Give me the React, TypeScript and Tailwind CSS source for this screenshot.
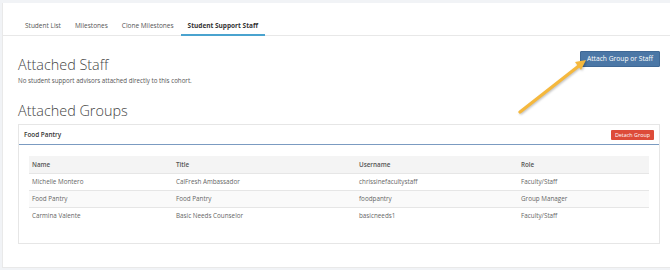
import React from "react";

const rows = [
  ["Michelle Montero", "CalFresh Ambassador", "chrissinefacultystaff", "Faculty/Staff"],
  ["Food Pantry", "Food Pantry", "foodpantry", "Group Manager"],
  ["Carmina Valente", "Basic Needs Counselor", "basicneeds1", "Faculty/Staff"],
];

export default function App() {
  return (
    <div
      className="w-[670px] h-[270px] bg-[#f1f3f6] pt-[3px] pl-[2px] overflow-hidden"
      style={{ fontFamily: '"Open Sans", "Liberation Sans", sans-serif' }}
    >
      <div className="relative h-[265px] bg-white border-l border-b border-[#e9e9e9]">
        {/* Tabs */}
        <div className="flex items-end h-[33px] border-b border-[#e8e8e8] pl-[15px]">
          {["Student List", "Milestones", "Clone Milestones", "Student Support Staff"].map((t, i) => (
            <div
              key={t}
              className={
                i === 3
                  ? "px-[7px] pb-[4px] border-b-[2px] border-[#4aa3cf] text-[6.5px] leading-[9px] font-bold text-[#333] mb-[-1px]"
                  : "px-[7px] pb-[4px] border-b-[2px] border-transparent text-[6.5px] leading-[9px] text-[#555] mb-[-1px]"
              }
            >
              {t}
            </div>
          ))}
        </div>

        <div className="pl-[15px] pr-[10px] pt-[15px]">
          <div className="flex justify-between items-start">
            <h1 className="mt-[5px] text-[14.4px] leading-[18px] font-light text-[#444]">Attached Staff</h1>
            <button className="h-[16px] px-[6px] bg-[#4b77a6] border border-[#3f6895] rounded-[1px] text-white text-[6.7px] leading-[14px]">
              Attach Group or Staff
            </button>
          </div>
          <p className="mt-[3px] text-[6.2px] leading-[8px] text-[#555]">
            No student support advisors attached directly to this cohort.
          </p>
          <h2 className="mt-[17px] text-[14.4px] leading-[18px] font-light text-[#444]">Attached Groups</h2>

          <div className="mt-[4px] border border-[#e6e6e6]">
            <div className="flex items-center justify-between h-[20px] px-[5px] border-b-[1.5px] border-[#7b9bc1]">
              <span className="text-[6.4px] font-semibold text-[#333]">Food Pantry</span>
              <span className="h-[10px] px-[4px] bg-[#dd4b39] rounded-[1px] text-white text-[5.4px] leading-[10px]">
                Detach Group
              </span>
            </div>
            <div className="px-[10px] pt-[11px] pb-[19px]">
              <div className="grid grid-cols-[144px_183px_162px_1fr] h-[17px] items-center bg-[#f4f4f4] text-[6.3px] font-semibold text-[#555]">
                <div className="pl-[3px]">Name</div>
                <div className="pl-[3px]">Title</div>
                <div className="pl-[3px]">Username</div>
                <div className="pl-[3px]">Role</div>
              </div>
              {rows.map((r, i) => (
                <div
                  key={i}
                  className={
                    i === 1
                      ? "grid grid-cols-[144px_183px_162px_1fr] h-[17px] items-center border-t border-[#e6e6e6] bg-[#fafafa] text-[6.3px] text-[#666]"
                      : "grid grid-cols-[144px_183px_162px_1fr] h-[17px] items-center border-t border-[#e6e6e6] text-[6.3px] text-[#666]"
                  }
                >
                  {r.map((c, j) => (
                    <div key={j} className="pl-[3px]">
                      {c}
                    </div>
                  ))}
                </div>
              ))}
            </div>
          </div>
        </div>

        {/* Arrow annotation */}
        <svg
          className="absolute left-[505px] top-[48px] pointer-events-none"
          width="90"
          height="70"
          viewBox="0 0 90 70"
          style={{ filter: "drop-shadow(1px 1.5px 1px rgba(0,0,0,0.25))" }}
        >
          <line x1="12" y1="61" x2="72" y2="14" stroke="#f5b83d" strokeWidth="3.2" strokeLinecap="round" />
          <polygon points="78,9 67,11 73,19" fill="#f5b83d" />
        </svg>
      </div>
    </div>
  );
}
